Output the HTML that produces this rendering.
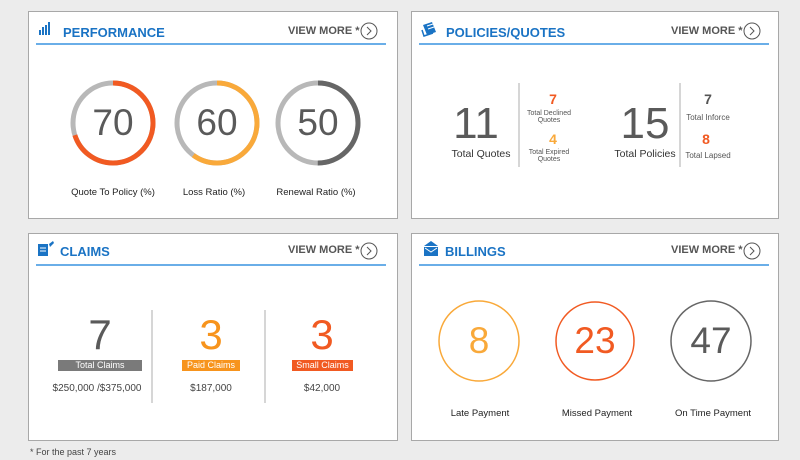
<!DOCTYPE html>
<html><head><meta charset="utf-8"><style>
*{margin:0;padding:0;box-sizing:border-box}
body{width:800px;height:460px;background:#ececec;font-family:"Liberation Sans",Arial,sans-serif;position:relative;overflow:hidden;color:#333}
.p{position:absolute;background:#fff;border:1px solid #a8a8a8}
.a{position:absolute;white-space:nowrap}
.t{color:#1a73c4;font-weight:bold;font-size:13px}
.vm{color:#555;font-weight:bold;font-size:11px}
.ln{position:absolute;height:2px;background:#6aaee8}
.c{transform:translateX(-50%);text-align:center}
.lbl{font-size:9.5px;color:#222}
.dv{position:absolute;width:2px;background:#d6d6d6}
.tag{color:#fff;font-size:9px;text-align:center;line-height:11px}
.big{color:#5a5a5a}
</style></head><body>
<div class="p" style="left:28px;top:11px;width:370px;height:208px"></div>
<div class="p" style="left:411px;top:11px;width:368px;height:208px"></div>
<div class="p" style="left:28px;top:233px;width:370px;height:208px"></div>
<div class="p" style="left:411px;top:233px;width:368px;height:208px"></div>

<svg width="800" height="460" style="position:absolute;left:0;top:0">
<g fill="#1a73c4">
<rect x="39" y="30" width="2" height="5"/><rect x="42" y="27" width="2" height="8"/><rect x="45" y="25" width="2" height="10"/><rect x="48" y="22" width="2" height="13"/>
<path d="M423 25 l9-3 4 10 -9 3z"/><path d="M422 30 l2 6 9-3" fill="none" stroke="#1a73c4" stroke-width="1.5"/>
<rect x="38" y="244" width="10" height="12"/><path d="M49 244 l4 -3 1 2 -4 4z"/>
<path d="M424 246 l7-5 7 5z"/><rect x="424" y="247" width="14" height="9"/>
</g>
<g stroke="#fff" stroke-width="1"><line x1="427" y1="26" x2="433" y2="24"/><line x1="428" y1="29" x2="434" y2="27"/><line x1="40" y1="248" x2="46" y2="248"/><line x1="40" y1="251" x2="46" y2="251"/><path d="M425 248 l6 4 6-4" fill="none"/></g>
<g fill="none" stroke="#555" stroke-width="1">
<circle cx="369" cy="31" r="8"/><path d="M367 27 l4 4 -4 4"/>
<circle cx="752" cy="31" r="8"/><path d="M750 27 l4 4 -4 4"/>
<circle cx="369" cy="251" r="8"/><path d="M367 247 l4 4 -4 4"/>
<circle cx="752" cy="251" r="8"/><path d="M750 247 l4 4 -4 4"/>
</g>
<g fill="none" stroke-width="5">
<circle cx="113" cy="123" r="40" stroke="#b8b8b8"/>
<circle cx="113" cy="123" r="40" stroke="#f15a22" stroke-dasharray="175.9 251.3" transform="rotate(-90 113 123)"/>
<circle cx="217" cy="123" r="40" stroke="#b8b8b8"/>
<circle cx="217" cy="123" r="40" stroke="#f9a93a" stroke-dasharray="150.8 251.3" transform="rotate(-90 217 123)"/>
<circle cx="318" cy="123" r="40" stroke="#b8b8b8"/>
<circle cx="318" cy="123" r="40" stroke="#666" stroke-dasharray="125.7 251.3" transform="rotate(-90 318 123)"/>
</g>
<g fill="none" stroke-width="1.5">
<circle cx="479" cy="341" r="40" stroke="#f9a93a"/>
<circle cx="595" cy="341" r="39" stroke="#f15a22"/>
<circle cx="711" cy="341" r="40" stroke="#666"/>
</g>
</svg>

<div class="ln" style="left:36px;top:43px;width:350px"></div>
<div class="ln" style="left:419px;top:43px;width:350px"></div>
<div class="ln" style="left:36px;top:264px;width:350px"></div>
<div class="ln" style="left:419px;top:264px;width:350px"></div>

<div class="a t" style="left:63px;top:25px">PERFORMANCE</div>
<div class="a t" style="left:446px;top:25px">POLICIES/QUOTES</div>
<div class="a t" style="left:60px;top:244px">CLAIMS</div>
<div class="a t" style="left:445px;top:244px">BILLINGS</div>
<div class="a vm" style="left:288px;top:25px">VIEW MORE *</div>
<div class="a vm" style="left:671px;top:25px">VIEW MORE *</div>
<div class="a vm" style="left:288px;top:244px">VIEW MORE *</div>
<div class="a vm" style="left:671px;top:244px">VIEW MORE *</div>

<div class="a c big" style="left:113px;top:102px;font-size:37px">70</div>
<div class="a c big" style="left:217px;top:102px;font-size:37px">60</div>
<div class="a c big" style="left:318px;top:102px;font-size:37px">50</div>
<div class="a c lbl" style="left:113px;top:187px">Quote To Policy (%)</div>
<div class="a c lbl" style="left:214px;top:187px">Loss Ratio (%)</div>
<div class="a c lbl" style="left:316px;top:187px">Renewal Ratio (%)</div>

<div class="a c big" style="left:476px;top:99px;font-size:44px">11</div>
<div class="a c" style="left:481px;top:148px;font-size:10.5px;color:#333">Total Quotes</div>
<div class="dv" style="left:518px;top:83px;height:84px"></div>
<div class="a c" style="left:553px;top:91px;font-size:14px;font-weight:bold;color:#f15a22">7</div>
<div class="a c" style="left:549px;top:110px;font-size:7px;line-height:7px;color:#555">Total Declined<br>Quotes</div>
<div class="a c" style="left:553px;top:131px;font-size:14px;font-weight:bold;color:#f9a93a">4</div>
<div class="a c" style="left:549px;top:149px;font-size:7px;line-height:7px;color:#555">Total Expired<br>Quotes</div>
<div class="a c big" style="left:645px;top:99px;font-size:44px">15</div>
<div class="a c" style="left:645px;top:148px;font-size:10.5px;color:#333">Total Policies</div>
<div class="dv" style="left:679px;top:83px;height:84px"></div>
<div class="a c" style="left:708px;top:91px;font-size:14px;font-weight:bold;color:#555">7</div>
<div class="a c" style="left:708px;top:113px;font-size:8px;color:#555">Total Inforce</div>
<div class="a c" style="left:706px;top:131px;font-size:14px;font-weight:bold;color:#f15a22">8</div>
<div class="a c" style="left:708px;top:151px;font-size:8px;color:#555">Total Lapsed</div>

<div class="a c big" style="left:100px;top:311px;font-size:42px">7</div>
<div class="a tag" style="left:58px;top:360px;width:84px;background:#7a7a7a">Total Claims</div>
<div class="a c" style="left:97px;top:383px;font-size:10px;color:#444">$250,000 /$375,000</div>
<div class="dv" style="left:151px;top:310px;height:93px"></div>
<div class="a c" style="left:211px;top:311px;font-size:42px;color:#f7941d">3</div>
<div class="a tag" style="left:182px;top:360px;width:58px;background:#f7941d">Paid Claims</div>
<div class="a c" style="left:211px;top:383px;font-size:10px;color:#444">$187,000</div>
<div class="dv" style="left:264px;top:310px;height:93px"></div>
<div class="a c" style="left:322px;top:311px;font-size:42px;color:#f15a22">3</div>
<div class="a tag" style="left:292px;top:360px;width:61px;background:#f15a22">Small Claims</div>
<div class="a c" style="left:322px;top:383px;font-size:10px;color:#444">$42,000</div>

<div class="a c" style="left:479px;top:320px;font-size:37px;color:#f9a93a">8</div>
<div class="a c" style="left:595px;top:320px;font-size:37px;color:#f15a22">23</div>
<div class="a c big" style="left:711px;top:320px;font-size:37px">47</div>
<div class="a c lbl" style="left:480px;top:408px">Late Payment</div>
<div class="a c lbl" style="left:597px;top:408px">Missed Payment</div>
<div class="a c lbl" style="left:713px;top:408px">On Time Payment</div>

<div class="a" style="left:30px;top:447px;font-size:9px;color:#444">* For the past 7 years</div>
</body></html>
